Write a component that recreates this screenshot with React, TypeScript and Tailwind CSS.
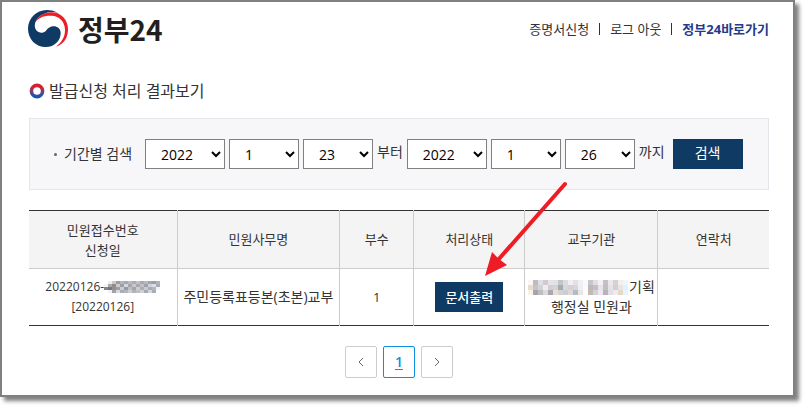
import { ReactNode } from 'react'

const years = ['2022', '2021', '2020']
const months = Array.from({ length: 12 }, (_, i) => String(i + 1))
const days = Array.from({ length: 31 }, (_, i) => String(i + 1))

const numberMosaic = [
  ['#fff', '#eee', '#c9c9cf', '#9d9da3', '#b8b4b8', '#a4a8b0', '#bdb9bf', '#a9adb3', '#c4c0c4', '#aaa8b0', '#b5b9c1', '#a6a6aa', '#9c9ca4', '#b0b4bc'],
  ['#f4f4f4', '#a8a8b0', '#8c8c90', '#cfcbc9', '#9aa0a8', '#d4d8e0', '#a5a5ad', '#c5c9cd', '#a9a9ad', '#c1c1c9', '#9da1a9', '#d3d3d7', '#d8e0e8', '#a8acb4'],
  ['#85858a', '#77777c', '#8e9298', '#a09ca0', '#c6ccd4', '#9a9aa2', '#c2beba', '#9ea6ae', '#c9cdd1', '#b0acb0', '#c6cad2', '#aeaab2', '#b2b6be', '#f4f4f8'],
  ['#fff', '#f2f2f4', '#a2a2a6', '#dadade', '#aaaeb4', '#b5b5bd', '#c9cdd5', '#b0b4b8', '#bebec6', '#cdd1d9', '#a6aab2', '#d5d5dd', '#aaaeb6', '#fff'],
]

const officeMosaic = [
  ['#faf7f3', '#bdbdc0', '#dedee8', '#d5c9cc', '#e4e4e8', '#e4e1e5', '#c5c5c8', '#dcdcdf', '#f1eff1', '#e3e1e8', '#f1eff2', '#fafafa', '#c9c6ca', '#e3dce0', '#f2f2f5', '#c8bec8', '#ece8ea', '#d9ced0', '#f4efec', '#edf6ff'],
  ['#e6ddd2', '#c3c3c8', '#d7d2d0', '#eeeef0', '#cfd0d6', '#d8d0d3', '#9fadb4', '#d7d7dc', '#d8cfd2', '#d6d6de', '#f0eef1', '#fafafa', '#bbb8be', '#c6bec4', '#e7e4e9', '#c2bec8', '#e5e3e7', '#cdd0d8', '#e8e4e3', '#e2f1ff'],
  ['#faf1e4', '#a5a6aa', '#bcbdc5', '#ded9dc', '#aca7ad', '#e5dfd5', '#d7d1d3', '#c9cfd0', '#ddd8de', '#b4bac2', '#e9e6ea', '#fdfdfd', '#c2bab0', '#d1d1d9', '#ebe9ed', '#b8b2bb', '#e2dfe7', '#eeebee', '#e4d8c6', '#e6f4ff'],
]

function Mosaic({ rows, className }: { rows: string[][]; className: string }) {
  return (
    <svg
      viewBox={`0 0 ${rows[0].length} ${rows.length}`}
      preserveAspectRatio="none"
      shapeRendering="crispEdges"
      aria-hidden="true"
      className={className}
    >
      {rows.map((row, y) =>
        row.map((fill, x) => (
          <rect key={`${x}-${y}`} x={x} y={y} width="1" height="1" fill={fill} />
        )),
      )}
    </svg>
  )
}

function Logo() {
  return (
    <a href="#" className="flex items-center gap-[10px] font-['Noto_Sans_CJK_KR',sans-serif]">
      <svg viewBox="0 0 120 111" className="h-[37px] w-10" aria-hidden="true">
        <path
          fill="#0f3a63"
          d="M90 8C77 2 67 0 56 0 25 0 0 25 0 56c0 32 24 55 53 55 27 0 45-19 45-42 0-13-10-20-21-20-12 0-17 7-23 13-8 8-19 8-26 2-9-8-10-22-3-33C34 15 55 6 72 6c8 0 14 1 18 2z"
        />
        <path
          fill="#ee1c25"
          d="M22 36C32 15 52 7 70 7c30 0 50 23 50 51 0 27-14 46-36 52 16-12 27-28 27-50 0-25-16-42-41-43-20-1-37 5-48 19z"
        />
      </svg>
      <span className="text-[28px] leading-8 font-bold text-[#231f20]">정부24</span>
    </a>
  )
}

function DateSelect({
  label,
  options,
  value,
  className,
}: {
  label: string
  options: string[]
  value: string
  className: string
}) {
  return (
    <select
      aria-label={label}
      defaultValue={value}
      className={`h-[30px] border border-[#808080] bg-white pl-[11px] text-sm text-black ${className}`}
    >
      {options.map((option) => (
        <option key={option}>{option}</option>
      ))}
    </select>
  )
}

function PageLink({ label, children }: { label: string; children: ReactNode }) {
  return (
    <a
      href="#"
      aria-label={label}
      className="flex size-8 items-center justify-center rounded-xs border border-[#cccccc]"
    >
      <svg viewBox="0 0 8 8" className="size-2" fill="none" stroke="#666">
        {children}
      </svg>
    </a>
  )
}

export default function App() {
  return (
    <div className="bg-white pr-[9px] pb-[9px] font-['Open_Sans','Noto_Sans_CJK_KR',sans-serif] text-[#333333]">
      <div className="border-2 border-[#808080] bg-white pt-2 pr-6 pb-[17px] pl-[27px] shadow-[4px_4px_4px_rgba(0,0,0,0.5)]">
        <header className="-ml-px flex items-center justify-between">
          <Logo />
          <nav className="flex items-center gap-[10px] text-[13px] leading-5">
            <a href="#">증명서신청</a>
            <span className="h-3 w-px bg-[#333333]" />
            <a href="#">로그 아웃</a>
            <span className="h-3 w-px bg-[#333333]" />
            <a href="#" className="font-bold text-[#243a8c]">
              정부24바로가기
            </a>
          </nav>
        </header>

        <h1 className="mt-8 flex items-center gap-1 text-base leading-6">
          <svg viewBox="0 0 16 16" className="size-4" fill="none" aria-hidden="true">
            <defs>
              <linearGradient id="ring" x1="0" y1="0" x2="0" y2="1">
                <stop offset="0.1" stopColor="#d9202f" />
                <stop offset="0.5" stopColor="#8a3a6c" />
                <stop offset="0.9" stopColor="#1c55b0" />
              </linearGradient>
            </defs>
            <circle cx="8" cy="8" r="5.6" stroke="url(#ring)" strokeWidth="3.6" />
          </svg>
          발급신청 처리 결과보기
        </h1>

        <form
          onSubmit={(e) => e.preventDefault()}
          className="mt-[15px] flex items-center gap-1 border border-[#e5e5ec] bg-[#f7f7fa] py-5 pl-6 text-sm"
        >
          <span className="mr-[9px] flex items-center gap-[7px]">
            <span className="size-[3px] rounded-full bg-[#666666]" />
            기간별 검색
          </span>
          <DateSelect label="시작 연도" options={years} value="2022" className="w-20" />
          <DateSelect label="시작 월" options={months} value="1" className="w-[70px]" />
          <DateSelect label="시작 일" options={days} value="23" className="w-[70px]" />
          <span className="pb-1">부터</span>
          <DateSelect label="종료 연도" options={years} value="2022" className="w-20" />
          <DateSelect label="종료 월" options={months} value="1" className="w-[70px]" />
          <DateSelect label="종료 일" options={days} value="26" className="w-[70px]" />
          <span className="pb-1">까지</span>
          <button type="submit" className="ml-1 h-[30px] w-[70px] bg-[#0f3a63] pb-0.5 text-white">
            검색
          </button>
        </form>

        <table className="mt-5 w-full table-fixed border-collapse border-y border-[#333333] text-center text-sm">
          <thead className="bg-[#f4f4f4] text-[13px]">
            <tr className="h-[58px] border-b border-[#cccccc] *:border-r *:border-[#cccccc] *:font-normal *:last:border-r-0">
              <th className="w-[20%] leading-5">
                민원접수번호
                <br />
                신청일
              </th>
              <th className="w-[22%]">민원사무명</th>
              <th className="w-[10%]">부수</th>
              <th className="w-[15%]">처리상태</th>
              <th className="w-[18%]">교부기관</th>
              <th className="w-[15%]">연락처</th>
            </tr>
          </thead>
          <tbody>
            <tr className="h-[57px] *:border-r *:border-[#cccccc] *:last:border-r-0">
              <td className="text-xs leading-5">
                <span className="flex items-center justify-center">
                  20220126-
                  <Mosaic rows={numberMosaic} className="h-3 w-14" />
                </span>
                [20220126]
              </td>
              <td>주민등록표등본(초본)교부</td>
              <td className="text-[13px]">1</td>
              <td>
                <div className="relative mx-auto h-[30px] w-[68px]">
                  <button
                    type="button"
                    className="size-full bg-[#0f3a63] text-[13px] font-medium text-white"
                  >
                    문서출력
                  </button>
                  <svg
                    viewBox="0 0 86 96"
                    className="pointer-events-none absolute bottom-9 left-[49px] h-24 w-[86px]"
                    aria-hidden="true"
                  >
                    <path
                      d="M81 4 14 80"
                      stroke="#ee1c25"
                      strokeWidth="4"
                      strokeLinecap="round"
                    />
                    <path d="M1 96 8 72l7 7 8 6z" fill="#ee1c25" />
                  </svg>
                </div>
              </td>
              <td className="leading-5">
                <span className="flex items-center justify-center gap-px">
                  <Mosaic rows={officeMosaic} className="h-[15px] w-[100px]" />
                  기획
                </span>
                행정실 민원과
              </td>
              <td />
            </tr>
          </tbody>
        </table>

        <nav aria-label="페이지" className="mt-5 flex justify-center gap-[6px]">
          <PageLink label="이전">
            <path d="M6 0 2 4l4 4" />
          </PageLink>
          <a
            href="#"
            aria-current="page"
            className="flex size-8 items-center justify-center rounded-xs border border-[#0d8fe0] text-sm font-semibold text-[#0d8fe0] underline underline-offset-2"
          >
            1
          </a>
          <PageLink label="다음">
            <path d="m2 0 4 4-4 4" />
          </PageLink>
        </nav>
      </div>
    </div>
  )
}
